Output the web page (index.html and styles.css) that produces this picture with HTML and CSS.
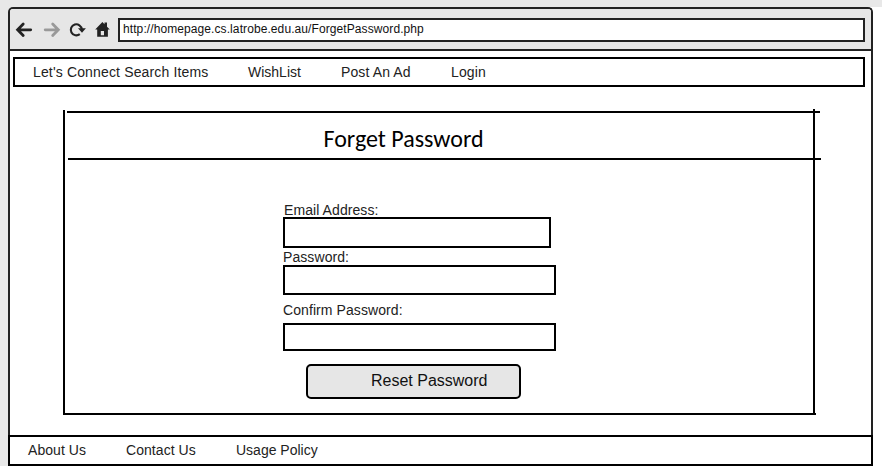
FILE: index.html
```html
<!DOCTYPE html>
<html lang="en">
<head>
<meta charset="utf-8">
<title>Forget Password</title>
<link rel="stylesheet" href="styles.css">
</head>
<body>
<div class="browser">
  <header class="toolbar">
    <svg class="icons" width="108" height="24" viewBox="0 0 108 24">
      <path class="back" d="M20.700 11.800H8.500M13.200 6L7.600 11.800L13.200 17.500"/>
      <path class="forward" d="M35.200 11.800H47.500M42.700 6L48.300 11.800L42.700 17.500"/>
      <path class="reload" d="M69.800 16.100A5.500 5.500 0 1 1 71.800 11.300"/>
      <path class="solid" d="M68 10.300H75.900L72 14.700Z"/>
      <path class="solid" fill-rule="evenodd" d="M85.200 11.600L92.400 4L94.500 6.200V4.500H97V8.700L99.800 11.600H97.900V18.700H87.200V11.600ZM90.800 13V17.300H94V13Z"/>
    </svg>
    <div class="address">http://homepage.cs.latrobe.edu.au/ForgetPassword.php</div>
  </header>
  <nav class="menu">
    <a class="search">Let's Connect Search Items</a><a class="wish">WishList</a><a class="post">Post An Ad</a><a class="login">Login</a>
  </nav>
  <main class="panel">
    <h1>Forget Password</h1>
    <form>
      <label class="email-label" for="email">Email Address:</label>
      <input class="email" id="email">
      <label class="password-label" for="password">Password:</label>
      <input class="password" id="password" type="password">
      <label class="confirm-label" for="confirm">Confirm Password:</label>
      <input class="confirm" id="confirm" type="password">
      <button type="button"><span>Reset Password</span></button>
    </form>
  </main>
  <footer class="footer">
    <a class="about">About Us</a><a class="contact">Contact Us</a><a>Usage Policy</a>
  </footer>
</div>
</body>
</html>
```
FILE: styles.css
```css
* { box-sizing: border-box; }
body {
  margin: 0;
  height: 471px;
  overflow: hidden;
  padding: 7px 0 0 8px;
  background: linear-gradient(#e8e8e8, #e8e8e8) 0 0 / 100% 7px no-repeat,
    linear-gradient(#e8e8e8, #e8e8e8) 0 0 / 12px 466px no-repeat, #fff;
  font: 14px/16px "Liberation Sans", Arial, sans-serif;
  color: #222;
}
.browser {
  width: 865px;
  height: 459px;
  display: flex;
  flex-direction: column;
  border: 2px solid #222;
  border-bottom: 0;
  border-radius: 5px 5px 0 0;
  background: #fff;
}
.toolbar {
  height: 42px;
  flex: none;
  display: flex;
  padding: 9px 6px 0 0;
  border-bottom: 2px solid #222;
  border-radius: 3px 3px 0 0;
  background: #e6e6e6;
}
.icons { flex: none; }
.icons path { fill: none; stroke-width: 2.8; stroke-linecap: round; }
.icons .back, .icons .reload { stroke: #222; }
.icons .forward { stroke: #999; }
.icons .reload { stroke-width: 2.1; stroke-linecap: butt; }
.icons .solid { fill: #222; stroke: none; }
.address {
  flex: 1;
  height: 24px;
  border: 2px solid #222;
  background: #fff;
  padding: 2px 3px;
  font-size: 12px;
  line-height: 14px;
  color: #111;
  letter-spacing: .09px;
}
.menu {
  flex: none;
  display: flex;
  width: 852px;
  height: 30px;
  margin: 6px 0 0 3px;
  padding: 5px 18px;
  border: 2px solid #000;
}
.menu a, .footer a { white-space: nowrap; }
.search { width: 215px; letter-spacing: .15px; }
.wish { width: 93px; }
.post { width: 110px; letter-spacing: .12px; }
.login { letter-spacing: .15px; }
.panel {
  flex: none;
  width: 753px;
  height: 306px;
  margin: 22px 0 0 53px;
  background: linear-gradient(#000, #000) 0 1px / 2px 100% no-repeat,
    linear-gradient(#000, #000) 750px 0 / 2px 100% no-repeat,
    linear-gradient(#000, #000) 0 100% / 100% 2px no-repeat;
}
h1 {
  width: 754px;
  height: 51px;
  margin: 0 0 0 4px;
  padding: 14px 0 0 256.5px;
  background: linear-gradient(#000, #000) 0 2px / 753px 2px no-repeat,
    linear-gradient(#000, #000) 1px 100% / 753px 2px no-repeat;
  font: 24px/32px Carlito, Calibri, "Open Sans", sans-serif;
  color: #000;
}
form { width: 273px; margin-left: 220px; display: flex; flex-direction: column; }
input { border: 2px solid #000; background: #fff; padding: 0 6px; width: 273px; }
label { letter-spacing: .08px; }
.email-label { margin: 42px 0 0 1px; height: 15px; }
.email { width: 268px; height: 31px; }
.password-label { height: 17px; padding-top: 1px; }
.password { height: 30px; }
.confirm-label { margin-top: 7px; height: 21px; }
.confirm { height: 28px; }
button {
  width: 215px;
  height: 35px;
  margin: 13px 0 0 23px;
  padding: 0 0 1px 63px;
  border: 2px solid #000;
  border-radius: 5px;
  background: #e6e6e6;
  font: 16px/18px "Liberation Sans", Arial, sans-serif;
  color: #111;
  text-align: left;
}
.footer {
  display: flex;
  height: 31px;
  width: 865px;
  margin: auto 0 0 -2px;
  padding: 5px 18px;
  border: 2px solid #000;
}
.about { width: 98px; letter-spacing: .06px; }
.contact { width: 110px; letter-spacing: .06px; }
```
